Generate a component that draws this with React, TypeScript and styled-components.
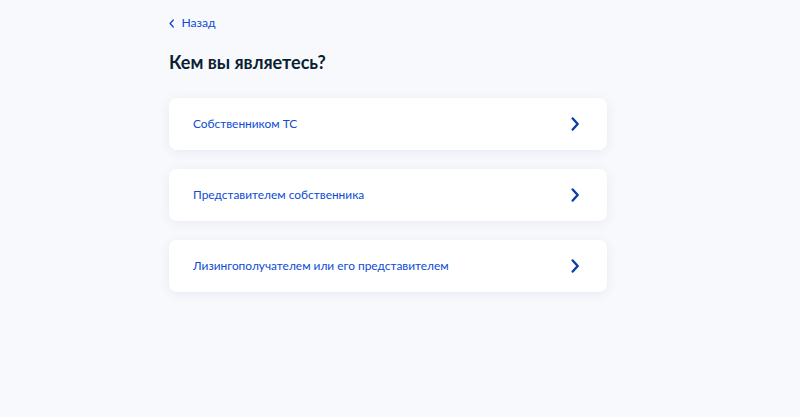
import React from "react";
import styled, { createGlobalStyle } from "styled-components";

const Global = createGlobalStyle`
  html, body { margin: 0; padding: 0; background: #f8f9fc; }
  body { font-family: Lato, "Noto Sans", Arial, sans-serif; -webkit-font-smoothing: antialiased; }
`;

const Page = styled.div`
  min-height: 417px;
  box-sizing: border-box;
  padding: 14px 0 0 169px;
`;

const Column = styled.div`
  width: 438px;
  display: flex;
  flex-direction: column;
`;

const Back = styled.a`
  display: flex;
  align-items: center;
  gap: 7px;
  color: #0d4cd3;
  font-size: 12.2px;
  line-height: 18px;
  text-decoration: none;
  cursor: pointer;
  height: 18px;
`;

const Title = styled.h1`
  margin: 18px 0 0;
  font-size: 18px;
  line-height: 24px;
  font-weight: 700;
  color: #0b1f33;
`;

const List = styled.div`
  margin-top: 24px;
  display: flex;
  flex-direction: column;
  gap: 19px;
`;

const Card = styled.button`
  all: unset;
  box-sizing: border-box;
  height: 52px;
  padding: 0 28px 0 24px;
  background: #ffffff;
  border-radius: 8px;
  box-shadow: 0 2px 12px rgba(30, 60, 130, 0.08);
  display: flex;
  align-items: center;
  justify-content: space-between;
  cursor: pointer;
`;

const Label = styled.span`
  font-size: 11.9px;
  line-height: 18px;
  color: #0d4cd3;
  font-family: Lato, "Noto Sans", Arial, sans-serif;
`;

const Chevron = ({ size = 14, stroke = 2.4, dir = "right" }: { size?: number; stroke?: number; dir?: "left" | "right" }) => (
  <svg width={size * 0.6} height={size} viewBox="0 0 8 14" fill="none">
    <path
      d={dir === "right" ? "M1.5 1.5 L6.5 7 L1.5 12.5" : "M6.5 1.5 L1.5 7 L6.5 12.5"}
      stroke={dir === "right" ? "#0d3ea8" : "#0d4cd3"}
      strokeWidth={stroke}
      strokeLinecap="round"
      strokeLinejoin="round"
    />
  </svg>
);

const items = [
  "Собственником ТС",
  "Представителем собственника",
  "Лизингополучателем или его представителем",
];

export default function App() {
  return (
    <>
      <Global />
      <Page>
        <Column>
          <Back>
            <Chevron size={9} stroke={2} dir="left" />
            Назад
          </Back>
          <Title>Кем вы являетесь?</Title>
          <List>
            {items.map((t) => (
              <Card key={t}>
                <Label>{t}</Label>
                <Chevron />
              </Card>
            ))}
          </List>
        </Column>
      </Page>
    </>
  );
}
